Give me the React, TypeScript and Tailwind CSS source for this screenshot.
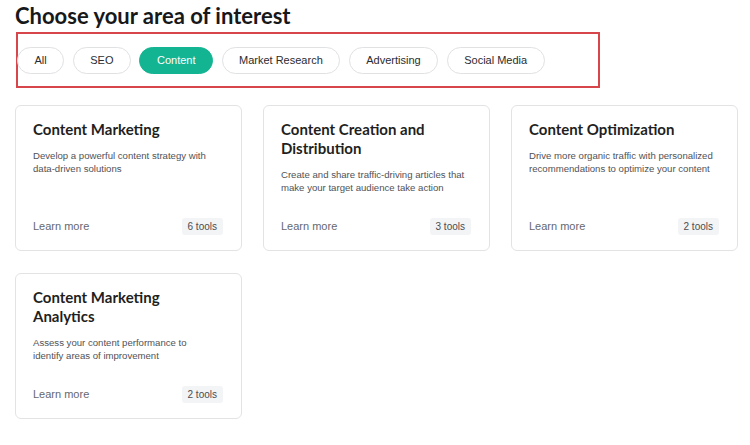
const filters = ['All', 'SEO', 'Content', 'Market Research', 'Advertising', 'Social Media']

const areas = [
  {
    title: 'Content Marketing',
    text: 'Develop a powerful content strategy with data-driven solutions',
    tools: 6,
  },
  {
    title: 'Content Creation and Distribution',
    text: 'Create and share traffic-driving articles that make your target audience take action',
    tools: 3,
  },
  {
    title: 'Content Optimization',
    text: 'Drive more organic traffic with personalized recommendations to optimize your content',
    tools: 2,
  },
  {
    title: 'Content Marketing Analytics',
    text: 'Assess your content performance to identify areas of improvement',
    tools: 2,
  },
]

function AreaCard({ title, text, tools }: { title: string; text: string; tools: number }) {
  return (
    <div className="h-[146px] flex flex-col bg-white border border-[#e2e3e5] rounded-[6px] pt-[14px] pb-[15px] pl-[17px] pr-[18px]">
      <h3 className="font-['Lato',sans-serif] font-bold text-[15px] leading-[19px] text-[#1f1f22] pr-2">{title}</h3>
      <p className="mt-[10px] max-w-[185px] text-[9.6px] leading-[13px] text-[#505257]">{text}</p>
      <div className="mt-auto flex items-center justify-between">
        <span className="text-[11px] text-[#66686d]">Learn more</span>
        <span className="h-[17px] px-[6px] flex items-center rounded-[3px] bg-[#f3f4f6] text-[10px] text-[#4a4c50]">
          {tools} tools
        </span>
      </div>
    </div>
  )
}

export default function App() {
  return (
    <div className="w-[750px] h-[445px] bg-white pl-[15px] pt-[2px] font-['Liberation_Sans',Arial,sans-serif] overflow-hidden">
      {/* Heading */}
      <h1 className="font-['Lato',sans-serif] font-bold text-[22px] leading-[28px] text-[#17181a]">
        Choose your area of interest
      </h1>

      {/* Filters */}
      <div className="mt-[2px] ml-[1px] w-[584px] h-[56px] border-2 border-[#d6464b] flex items-center gap-[8.5px]">
        {filters.map((f, i) => (
          <button
            key={f}
            className={
              (i === 0 ? '-ml-[1px] ' : '') +
              (f === 'Content'
                ? 'h-[27px] px-[16.5px] rounded-full border border-[#13b491] bg-[#13b491] text-white text-[11px]'
                : 'h-[27px] px-[16.5px] rounded-full border border-[#e0e1e3] bg-white text-[#2b2c2f] text-[11px]')
            }
          >
            {f}
          </button>
        ))}
      </div>

      {/* Cards */}
      <div className="mt-[17px] grid grid-cols-[227px_227px_227px] gap-x-[21px] gap-y-[22px]">
        {areas.map((a) => (
          <AreaCard key={a.title} {...a} />
        ))}
      </div>
    </div>
  )
}
